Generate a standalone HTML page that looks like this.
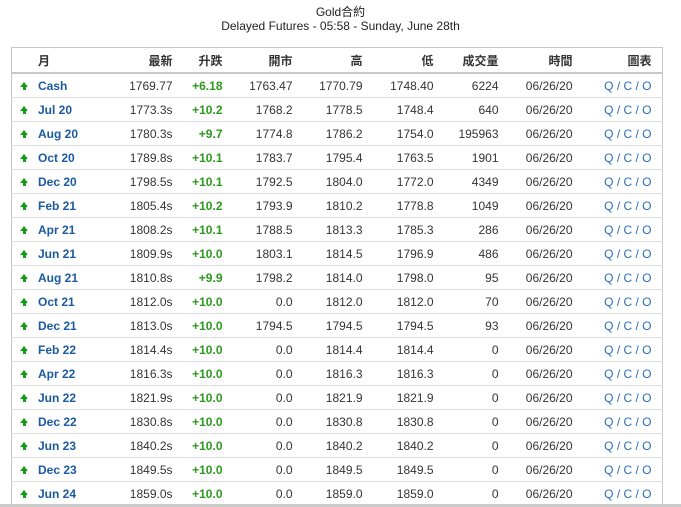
<!DOCTYPE html>
<html><head><meta charset="utf-8"><style>
body{margin:0;background:#fff;font-family:"Liberation Sans","Noto Sans CJK TC",sans-serif;font-size:12px;color:#333;width:681px;height:507px;overflow:hidden;position:relative}
.t1{position:absolute;top:5px;left:0;width:681px;text-align:center;font-size:12px;line-height:14px;color:#222}
table{position:absolute;top:47px;left:11px;width:652px;border-collapse:collapse;border:1px solid #c8c8c8}
th{height:24px;font-weight:bold;text-align:right;border-bottom:2px solid #c8c8c8;padding:0;color:#333}
td{height:23px;text-align:right;border-top:1px solid #ddd;padding:0;color:#333}
.m{text-align:left;color:#1a5aa0;font-weight:bold}
.g{color:#2a9a1a;font-weight:bold}
.q{color:#2a6db5}
.ar{display:inline-block;width:0;height:0;border-left:4px solid transparent;border-right:4px solid transparent;border-bottom:5px solid #1a9a1a;position:relative;top:-3px;margin:0 10px 0 8px}
.ar:after{content:"";position:absolute;left:-1.5px;top:5px;width:3px;height:3px;background:#1a9a1a}
.bot{position:absolute;top:504px;left:0;width:681px;height:3px;background:#ccc}
</style></head><body>
<div class="t1">Gold合約<br>Delayed Futures - 05:58 - Sunday, June 28th</div>
<table>
<colgroup><col style="width:100px"><col style="width:61px"><col style="width:50px"><col style="width:70px"><col style="width:70px"><col style="width:71px"><col style="width:65px"><col style="width:74px"><col style="width:79px"><col></colgroup>
<tr><th style="text-align:left;padding-left:26px">月</th><th>最新</th><th>升跌</th><th>開市</th><th>高</th><th>低</th><th>成交量</th><th>時間</th><th>圖表</th><th></th></tr>
<tr><td class="m"><span class="ar"></span>Cash</td><td>1769.77</td><td class="g">+6.18</td><td>1763.47</td><td>1770.79</td><td>1748.40</td><td>6224</td><td>06/26/20</td><td class="q">Q / C / O</td><td></td></tr>
<tr><td class="m"><span class="ar"></span>Jul 20</td><td>1773.3s</td><td class="g">+10.2</td><td>1768.2</td><td>1778.5</td><td>1748.4</td><td>640</td><td>06/26/20</td><td class="q">Q / C / O</td><td></td></tr>
<tr><td class="m"><span class="ar"></span>Aug 20</td><td>1780.3s</td><td class="g">+9.7</td><td>1774.8</td><td>1786.2</td><td>1754.0</td><td>195963</td><td>06/26/20</td><td class="q">Q / C / O</td><td></td></tr>
<tr><td class="m"><span class="ar"></span>Oct 20</td><td>1789.8s</td><td class="g">+10.1</td><td>1783.7</td><td>1795.4</td><td>1763.5</td><td>1901</td><td>06/26/20</td><td class="q">Q / C / O</td><td></td></tr>
<tr><td class="m"><span class="ar"></span>Dec 20</td><td>1798.5s</td><td class="g">+10.1</td><td>1792.5</td><td>1804.0</td><td>1772.0</td><td>4349</td><td>06/26/20</td><td class="q">Q / C / O</td><td></td></tr>
<tr><td class="m"><span class="ar"></span>Feb 21</td><td>1805.4s</td><td class="g">+10.2</td><td>1793.9</td><td>1810.2</td><td>1778.8</td><td>1049</td><td>06/26/20</td><td class="q">Q / C / O</td><td></td></tr>
<tr><td class="m"><span class="ar"></span>Apr 21</td><td>1808.2s</td><td class="g">+10.1</td><td>1788.5</td><td>1813.3</td><td>1785.3</td><td>286</td><td>06/26/20</td><td class="q">Q / C / O</td><td></td></tr>
<tr><td class="m"><span class="ar"></span>Jun 21</td><td>1809.9s</td><td class="g">+10.0</td><td>1803.1</td><td>1814.5</td><td>1796.9</td><td>486</td><td>06/26/20</td><td class="q">Q / C / O</td><td></td></tr>
<tr><td class="m"><span class="ar"></span>Aug 21</td><td>1810.8s</td><td class="g">+9.9</td><td>1798.2</td><td>1814.0</td><td>1798.0</td><td>95</td><td>06/26/20</td><td class="q">Q / C / O</td><td></td></tr>
<tr><td class="m"><span class="ar"></span>Oct 21</td><td>1812.0s</td><td class="g">+10.0</td><td>0.0</td><td>1812.0</td><td>1812.0</td><td>70</td><td>06/26/20</td><td class="q">Q / C / O</td><td></td></tr>
<tr><td class="m"><span class="ar"></span>Dec 21</td><td>1813.0s</td><td class="g">+10.0</td><td>1794.5</td><td>1794.5</td><td>1794.5</td><td>93</td><td>06/26/20</td><td class="q">Q / C / O</td><td></td></tr>
<tr><td class="m"><span class="ar"></span>Feb 22</td><td>1814.4s</td><td class="g">+10.0</td><td>0.0</td><td>1814.4</td><td>1814.4</td><td>0</td><td>06/26/20</td><td class="q">Q / C / O</td><td></td></tr>
<tr><td class="m"><span class="ar"></span>Apr 22</td><td>1816.3s</td><td class="g">+10.0</td><td>0.0</td><td>1816.3</td><td>1816.3</td><td>0</td><td>06/26/20</td><td class="q">Q / C / O</td><td></td></tr>
<tr><td class="m"><span class="ar"></span>Jun 22</td><td>1821.9s</td><td class="g">+10.0</td><td>0.0</td><td>1821.9</td><td>1821.9</td><td>0</td><td>06/26/20</td><td class="q">Q / C / O</td><td></td></tr>
<tr><td class="m"><span class="ar"></span>Dec 22</td><td>1830.8s</td><td class="g">+10.0</td><td>0.0</td><td>1830.8</td><td>1830.8</td><td>0</td><td>06/26/20</td><td class="q">Q / C / O</td><td></td></tr>
<tr><td class="m"><span class="ar"></span>Jun 23</td><td>1840.2s</td><td class="g">+10.0</td><td>0.0</td><td>1840.2</td><td>1840.2</td><td>0</td><td>06/26/20</td><td class="q">Q / C / O</td><td></td></tr>
<tr><td class="m"><span class="ar"></span>Dec 23</td><td>1849.5s</td><td class="g">+10.0</td><td>0.0</td><td>1849.5</td><td>1849.5</td><td>0</td><td>06/26/20</td><td class="q">Q / C / O</td><td></td></tr>
<tr><td class="m"><span class="ar"></span>Jun 24</td><td>1859.0s</td><td class="g">+10.0</td><td>0.0</td><td>1859.0</td><td>1859.0</td><td>0</td><td>06/26/20</td><td class="q">Q / C / O</td><td></td></tr>
</table>
<div class="bot"></div>
</body></html>
